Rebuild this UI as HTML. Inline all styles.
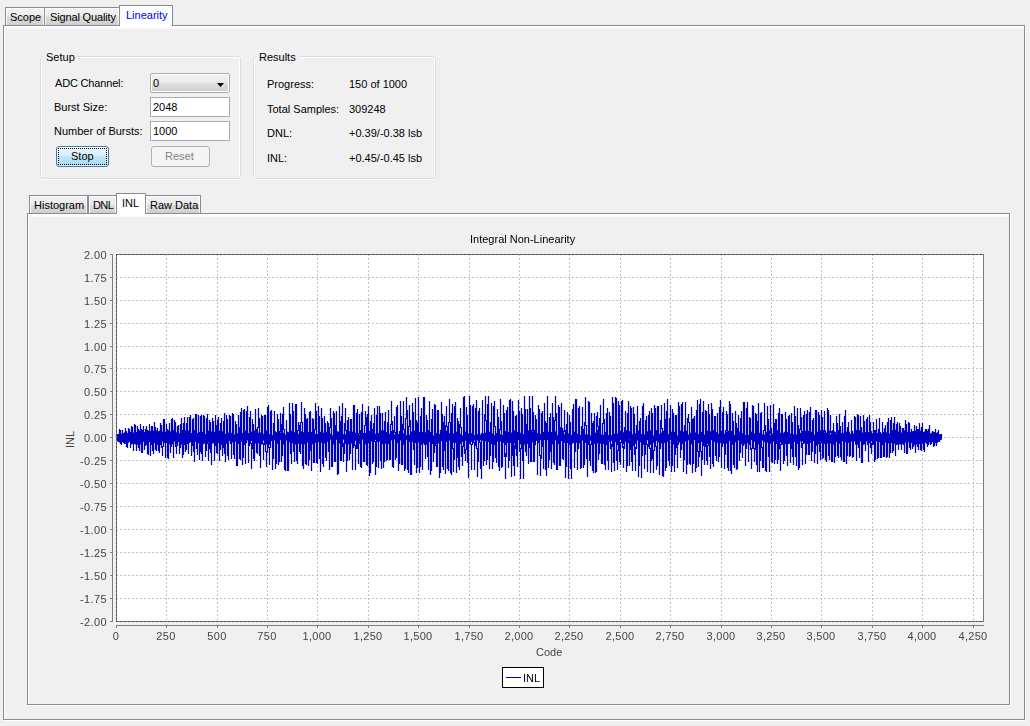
<!DOCTYPE html>
<html><head><meta charset="utf-8"><style>
html,body{margin:0;padding:0;}
body{width:1030px;height:726px;background:#f0f0f0;position:relative;overflow:hidden;font-family:"Liberation Sans", sans-serif;}
.t{position:absolute;white-space:nowrap;line-height:13px;}
.g{will-change:transform;}
.b{position:absolute;}
</style></head><body>
<div class="b" style="left:3px;top:25px;width:1022px;height:695px;box-sizing:border-box;border:1px solid #898c95;"></div><div class="b" style="left:4px;top:26px;width:1020px;height:693px;box-sizing:border-box;border:1px solid #fff;border-right:0;border-bottom:0;"></div><div class="b" style="left:4px;top:27px;width:1019px;height:2px;background:linear-gradient(#fff,#f6f6f6);"></div><div class="b" style="left:1025px;top:25px;width:1px;height:696px;background:#fff;"></div><div class="b" style="left:3px;top:720px;width:1023px;height:1px;background:#fff;"></div><div class="b" style="left:5px;top:7px;width:40px;height:18px;box-sizing:border-box;border:1px solid #898c95;border-bottom:0;background:linear-gradient(#f2f2f2 0%,#ebebeb 50%,#dddddd 50%,#cfcfcf 100%);"></div><div class="b" style="left:6px;top:8px;width:38px;height:17px;box-sizing:border-box;border:1px solid rgba(255,255,255,.8);border-bottom:0;"></div><div class="t" style="left:10px;top:11px;font-size:11px;color:#000;">Scope</div><div class="b" style="left:44px;top:7px;width:76px;height:18px;box-sizing:border-box;border:1px solid #898c95;border-bottom:0;background:linear-gradient(#f2f2f2 0%,#ebebeb 50%,#dddddd 50%,#cfcfcf 100%);"></div><div class="b" style="left:45px;top:8px;width:74px;height:17px;box-sizing:border-box;border:1px solid rgba(255,255,255,.8);border-bottom:0;"></div><div class="t" style="left:50px;top:11px;font-size:11px;color:#000;letter-spacing:-0.15px;">Signal Quality</div><div class="b" style="left:119px;top:5px;width:54px;height:21px;box-sizing:border-box;border:1px solid #898c95;border-bottom:0;background:#fff;"></div><div class="b" style="left:120px;top:26px;width:52px;height:1px;background:#fff;"></div><div class="t" style="left:126px;top:9px;font-size:11px;color:#0000f0;">Linearity</div><div class="b" style="left:42px;top:56px;width:197px;height:1px;background:#d5dfe5;"></div><div class="b" style="left:42px;top:178px;width:197px;height:1px;background:#d5dfe5;"></div><div class="b" style="left:40px;top:58px;width:1px;height:119px;background:#d5dfe5;"></div><div class="b" style="left:240px;top:58px;width:1px;height:119px;background:#d5dfe5;"></div><div class="b" style="left:41px;top:57px;width:1px;height:1px;background:#d5dfe5;"></div><div class="b" style="left:239px;top:57px;width:1px;height:1px;background:#d5dfe5;"></div><div class="b" style="left:41px;top:177px;width:1px;height:1px;background:#d5dfe5;"></div><div class="b" style="left:239px;top:177px;width:1px;height:1px;background:#d5dfe5;"></div><div class="b" style="left:42px;top:57px;width:197px;height:1px;background:#fff;"></div><div class="b" style="left:41px;top:58px;width:1px;height:119px;background:#fff;"></div><div class="b" style="left:239px;top:58px;width:1px;height:119px;background:#fff;"></div><div class="b" style="left:42px;top:179px;width:197px;height:1px;background:#fff;"></div><div class="b" style="left:44px;top:55px;width:33px;height:4px;background:#f0f0f0;"></div><div class="t" style="left:46px;top:51px;font-size:11px;color:#000;">Setup</div><div class="b" style="left:255px;top:56px;width:179px;height:1px;background:#d5dfe5;"></div><div class="b" style="left:255px;top:178px;width:179px;height:1px;background:#d5dfe5;"></div><div class="b" style="left:253px;top:58px;width:1px;height:119px;background:#d5dfe5;"></div><div class="b" style="left:435px;top:58px;width:1px;height:119px;background:#d5dfe5;"></div><div class="b" style="left:254px;top:57px;width:1px;height:1px;background:#d5dfe5;"></div><div class="b" style="left:434px;top:57px;width:1px;height:1px;background:#d5dfe5;"></div><div class="b" style="left:254px;top:177px;width:1px;height:1px;background:#d5dfe5;"></div><div class="b" style="left:434px;top:177px;width:1px;height:1px;background:#d5dfe5;"></div><div class="b" style="left:255px;top:57px;width:179px;height:1px;background:#fff;"></div><div class="b" style="left:254px;top:58px;width:1px;height:119px;background:#fff;"></div><div class="b" style="left:434px;top:58px;width:1px;height:119px;background:#fff;"></div><div class="b" style="left:255px;top:179px;width:179px;height:1px;background:#fff;"></div><div class="b" style="left:257px;top:55px;width:42px;height:4px;background:#f0f0f0;"></div><div class="t" style="left:259px;top:51px;font-size:11px;color:#000;">Results</div><div class="t" style="left:55px;top:77px;font-size:11px;color:#000;letter-spacing:-0.17px;">ADC Channel:</div><div class="t" style="left:54px;top:101px;font-size:11px;color:#000;">Burst Size:</div><div class="t" style="left:54px;top:125px;font-size:11px;color:#000;">Number of Bursts:</div><div class="b" style="left:150px;top:73px;width:80px;height:20px;box-sizing:border-box;border:1px solid #acacac;border-radius:2px;background:linear-gradient(#f2f2f2 0%,#ebebeb 45%,#dddddd 55%,#cfcfcf 100%);box-shadow:inset 0 0 0 1px #fff;"></div><div class="t" style="left:153px;top:77px;font-size:11px;color:#000;">0</div><svg class="b" style="left:217px;top:83px" width="8" height="5"><path d="M0,0H7L3.5,4Z" fill="#000"/></svg><div class="b" style="left:150px;top:97px;width:80px;height:20px;box-sizing:border-box;border:1px solid #abadb3;background:#fff;border-top-color:#abadb3;"></div><div class="t" style="left:153px;top:101px;font-size:11px;color:#000;">2048</div><div class="b" style="left:150px;top:121px;width:80px;height:20px;box-sizing:border-box;border:1px solid #abadb3;background:#fff;"></div><div class="t" style="left:153px;top:125px;font-size:11px;color:#000;">1000</div><div class="b" style="left:56px;top:146px;width:53px;height:21px;box-sizing:border-box;border:1px solid #3c7fb1;border-radius:3px;background:linear-gradient(#eaf6fd 0%,#d9f0fc 45%,#bee6fd 50%,#a7d9f5 100%);box-shadow:inset 0 0 0 1px rgba(255,255,255,.6);"></div><div class="b" style="left:58px;top:148px;width:49px;height:17px;box-sizing:border-box;border:1px dotted #000;"></div><div class="t" style="left:71px;top:150px;font-size:11px;color:#000;">Stop</div><div class="b" style="left:151px;top:146px;width:59px;height:21px;box-sizing:border-box;border:1px solid #adb2b5;border-radius:3px;background:#f4f4f4;"></div><div class="t" style="left:165px;top:150px;font-size:11px;color:#838383;">Reset</div><div class="t" style="left:267px;top:78px;font-size:11px;color:#000;">Progress:</div><div class="t" style="left:349px;top:78px;font-size:11px;color:#000;">150 of 1000</div><div class="t" style="left:267px;top:103px;font-size:11px;color:#000;">Total Samples:</div><div class="t" style="left:349px;top:103px;font-size:11px;color:#000;">309248</div><div class="t" style="left:267px;top:127px;font-size:11px;color:#000;">DNL:</div><div class="t" style="left:349px;top:127px;font-size:11px;color:#000;">+0.39/-0.38 lsb</div><div class="t" style="left:267px;top:152px;font-size:11px;color:#000;">INL:</div><div class="t" style="left:349px;top:152px;font-size:11px;color:#000;">+0.45/-0.45 lsb</div><div class="b" style="left:27px;top:213px;width:983px;height:492px;box-sizing:border-box;border:1px solid #898c95;"></div><div class="b" style="left:28px;top:214px;width:981px;height:490px;box-sizing:border-box;border:1px solid #fff;border-right:0;border-bottom:0;"></div><div class="b" style="left:28px;top:215px;width:980px;height:2px;background:linear-gradient(#fff,#f6f6f6);"></div><div class="b" style="left:1010px;top:213px;width:1px;height:493px;background:#fff;"></div><div class="b" style="left:27px;top:705px;width:984px;height:1px;background:#fff;"></div><div class="b" style="left:29px;top:195px;width:59px;height:18px;box-sizing:border-box;border:1px solid #898c95;border-bottom:0;background:linear-gradient(#f2f2f2 0%,#ebebeb 50%,#dddddd 50%,#cfcfcf 100%);"></div><div class="b" style="left:30px;top:196px;width:57px;height:17px;box-sizing:border-box;border:1px solid rgba(255,255,255,.8);border-bottom:0;"></div><div class="t" style="left:34px;top:199px;font-size:11px;color:#000;">Histogram</div><div class="b" style="left:88px;top:195px;width:29px;height:18px;box-sizing:border-box;border:1px solid #898c95;border-bottom:0;background:linear-gradient(#f2f2f2 0%,#ebebeb 50%,#dddddd 50%,#cfcfcf 100%);"></div><div class="b" style="left:89px;top:196px;width:27px;height:17px;box-sizing:border-box;border:1px solid rgba(255,255,255,.8);border-bottom:0;"></div><div class="t" style="left:93px;top:199px;font-size:11px;color:#000;letter-spacing:-0.6px;">DNL</div><div class="b" style="left:145px;top:195px;width:56px;height:18px;box-sizing:border-box;border:1px solid #898c95;border-bottom:0;background:linear-gradient(#f2f2f2 0%,#ebebeb 50%,#dddddd 50%,#cfcfcf 100%);"></div><div class="b" style="left:146px;top:196px;width:54px;height:17px;box-sizing:border-box;border:1px solid rgba(255,255,255,.8);border-bottom:0;"></div><div class="t" style="left:150px;top:199px;font-size:11px;color:#000;">Raw Data</div><div class="b" style="left:116px;top:193px;width:30px;height:21px;box-sizing:border-box;border:1px solid #898c95;border-bottom:0;background:#fff;"></div><div class="b" style="left:117px;top:214px;width:28px;height:1px;background:#fff;"></div><div class="t" style="left:122px;top:197px;font-size:11px;color:#000;">INL</div><svg class="b" style="left:0;top:0" width="1030" height="726"><rect x="116" y="254" width="867" height="367" fill="#fff"/><path d="M116.5 254V621M166.5 254V621M217.5 254V621M267.5 254V621M317.5 254V621M368.5 254V621M418.5 254V621M469.5 254V621M519.5 254V621M569.5 254V621M620.5 254V621M670.5 254V621M721.5 254V621M771.5 254V621M821.5 254V621M872.5 254V621M922.5 254V621M973.5 254V621M116 254.5H983M116 277.5H983M116 300.5H983M116 323.5H983M116 346.5H983M116 368.5H983M116 391.5H983M116 414.5H983M116 437.5H983M116 460.5H983M116 483.5H983M116 506.5H983M116 529.5H983M116 552.5H983M116 575.5H983M116 598.5H983M116 621.5H983" stroke="#c0c0c0" stroke-width="1" stroke-dasharray="2,2" fill="none"/><path d="M116.5 434V438M117.5 434V441M118.5 439V442M119.5 429V440M120.5 430V444M121.5 437V445M122.5 430V438M123.5 435V443M124.5 439V444M125.5 428V440M126.5 434V447M127.5 436V448M128.5 428V437M129.5 429V441M130.5 440V448M131.5 426V441M132.5 427V444M133.5 439V451M134.5 424V440M135.5 425V443M136.5 442V451M137.5 426V444M138.5 429V448M139.5 437V451M140.5 424V438M141.5 429V453M142.5 430V453M143.5 426V435M144.5 434V450M145.5 429V446M146.5 426V436M147.5 435V454M148.5 432V455M149.5 424V435M150.5 434V456M151.5 426V445M152.5 426V451M153.5 433V454M154.5 422V434M155.5 427V450M156.5 434V451M157.5 428V435M158.5 433V451M159.5 437V453M160.5 423V438M161.5 425V448M162.5 446V456M163.5 419V447M164.5 419V443M165.5 442V458M166.5 424V443M167.5 429V458M168.5 436V459M169.5 423V437M170.5 435V453M171.5 419V447M172.5 418V442M173.5 436V458M174.5 420V437M175.5 422V447M176.5 445V454M177.5 426V446M178.5 425V440M179.5 439V454M180.5 424V448M181.5 418V431M182.5 430V458M183.5 423V455M184.5 417V433M185.5 432V452M186.5 423V450M187.5 417V444M188.5 442V454M189.5 417V443M190.5 415V434M191.5 433V456M192.5 419V446M193.5 418V452M194.5 440V462M195.5 414V441M196.5 414V449M197.5 433V455M198.5 415V434M199.5 432V460M200.5 416V452M201.5 415V454M202.5 440V461M203.5 415V441M204.5 416V440M205.5 439V457M206.5 418V451M207.5 414V444M208.5 443V461M209.5 420V449M210.5 422V453M211.5 439V465M212.5 418V440M213.5 421V441M214.5 438V461M215.5 415V446M216.5 425V453M217.5 420V454M218.5 417V438M219.5 437V461M220.5 423V450M221.5 418V445M222.5 444V456M223.5 421V448M224.5 413V454M225.5 438V462M226.5 415V439M227.5 419V456M228.5 435V460M229.5 415V436M230.5 416V444M231.5 441V459M232.5 413V442M233.5 414V455M234.5 440V459M235.5 421V441M236.5 424V466M237.5 434V466M238.5 415V435M239.5 427V459M240.5 412V460M241.5 408V440M242.5 439V465M243.5 410V458M244.5 409V445M245.5 442V464M246.5 411V443M247.5 406V434M248.5 433V463M249.5 417V446M250.5 411V444M251.5 443V469M252.5 419V449M253.5 424V459M254.5 434V461M255.5 409V435M256.5 429V453M257.5 427V454M258.5 408V428M259.5 418V456M260.5 436V468M261.5 415V439M262.5 416V444M263.5 443V460M264.5 415V445M265.5 415V452M266.5 451V467M267.5 407V453M268.5 405V448M269.5 447V465M270.5 411V448M271.5 410V437M272.5 436V470M273.5 423V459M274.5 411V438M275.5 437V469M276.5 438V464M277.5 414V439M278.5 419V465M279.5 431V462M280.5 413V432M281.5 424V462M282.5 414V456M283.5 407V430M284.5 429V470M285.5 436V471M286.5 420V440M287.5 439V471M288.5 436V471M289.5 403V437M290.5 414V454M291.5 439V464M292.5 403V440M293.5 411V452M294.5 439V462M295.5 404V440M296.5 404V461M297.5 430V464M298.5 422V431M299.5 425V452M300.5 422V454M301.5 402V423M302.5 422V466M303.5 439V469M304.5 408V440M305.5 414V464M306.5 419V465M307.5 418V439M308.5 438V466M309.5 412V460M310.5 411V451M311.5 441V471M312.5 418V442M313.5 419V463M314.5 429V463M315.5 403V430M316.5 411V463M317.5 434V464M318.5 406V435M319.5 416V459M320.5 441V472M321.5 408V442M322.5 418V464M323.5 441V467M324.5 416V442M325.5 423V458M326.5 434V461M327.5 421V435M328.5 423V452M329.5 427V470M330.5 408V428M331.5 418V467M332.5 437V467M333.5 411V438M334.5 413V462M335.5 425V462M336.5 411V437M337.5 436V475M338.5 433V474M339.5 406V434M340.5 421V461M341.5 416V461M342.5 403V447M343.5 443V462M344.5 423V454M345.5 408V431M346.5 430V472M347.5 420V461M348.5 417V437M349.5 436V460M350.5 419V454M351.5 419V441M352.5 440V470M353.5 405V448M354.5 405V446M355.5 445V470M356.5 413V449M357.5 409V449M358.5 433V464M359.5 414V434M360.5 433V467M361.5 412V468M362.5 404V434M363.5 433V462M364.5 425V462M365.5 411V426M366.5 417V465M367.5 414V466M368.5 406V437M369.5 436V476M370.5 421V473M371.5 415V433M372.5 429V464M373.5 423V462M374.5 408V442M375.5 441V475M376.5 415V467M377.5 406V434M378.5 433V468M379.5 406V441M380.5 413V461M381.5 436V469M382.5 413V438M383.5 433V468M384.5 421V462M385.5 412V440M386.5 439V461M387.5 422V460M388.5 410V437M389.5 436V460M390.5 424V460M391.5 401V425M392.5 421V467M393.5 430V468M394.5 416V433M395.5 432V460M396.5 407V458M397.5 405V435M398.5 434V471M399.5 431V464M400.5 401V432M401.5 416V465M402.5 424V465M403.5 401V430M404.5 429V471M405.5 418V469M406.5 397V419M407.5 410V470M408.5 426V473M409.5 405V427M410.5 420V475M411.5 433V475M412.5 403V434M413.5 412V450M414.5 440V465M415.5 398V441M416.5 420V473M417.5 422V468M418.5 397V433M419.5 432V473M420.5 416V467M421.5 408V439M422.5 438V470M423.5 397V443M424.5 397V445M425.5 437V459M426.5 415V438M427.5 420V457M428.5 430V470M429.5 401V433M430.5 432V475M431.5 419V471M432.5 409V444M433.5 443V462M434.5 404V453M435.5 405V446M436.5 445V467M437.5 410V467M438.5 410V435M439.5 434V478M440.5 430V473M441.5 402V432M442.5 414V467M443.5 422V470M444.5 416V451M445.5 425V474M446.5 406V427M447.5 426V469M448.5 422V471M449.5 399V423M450.5 422V473M451.5 413V475M452.5 404V449M453.5 448V472M454.5 406V460M455.5 402V443M456.5 442V473M457.5 418V458M458.5 421V467M459.5 424V470M460.5 408V428M461.5 427V457M462.5 446V466M463.5 397V447M464.5 396V454M465.5 449V461M466.5 407V450M467.5 415V463M468.5 437V478M469.5 396V438M470.5 405V445M471.5 444V470M472.5 406V445M473.5 404V443M474.5 442V470M475.5 408V446M476.5 400V449M477.5 448V477M478.5 411V462M479.5 408V443M480.5 442V469M481.5 433V479M482.5 400V438M483.5 437V466M484.5 414V461M485.5 396V421M486.5 420V465M487.5 404V460M488.5 396V442M489.5 440V469M490.5 422V456M491.5 403V436M492.5 435V469M493.5 406V462M494.5 401V427M495.5 426V458M496.5 433V463M497.5 409V434M498.5 417V467M499.5 429V471M500.5 399V430M501.5 421V468M502.5 437V467M503.5 405V443M504.5 413V457M505.5 453V479M506.5 410V457M507.5 407V433M508.5 432V468M509.5 400V461M510.5 399V443M511.5 442V477M512.5 401V456M513.5 411V466M514.5 445V476M515.5 416V449M516.5 415V456M517.5 439V467M518.5 400V440M519.5 411V452M520.5 448V479M521.5 408V449M522.5 414V461M523.5 441V479M524.5 396V442M525.5 409V452M526.5 424V456M527.5 409V439M528.5 438V464M529.5 396V448M530.5 408V462M531.5 430V462M532.5 396V431M533.5 412V462M534.5 437V462M535.5 415V439M536.5 419V440M537.5 439V475M538.5 405V441M539.5 409V456M540.5 455V476M541.5 413V459M542.5 411V447M543.5 436V469M544.5 403V437M545.5 421V470M546.5 423V476M547.5 396V435M548.5 434V468M549.5 417V460M550.5 413V452M551.5 433V469M552.5 403V434M553.5 417V463M554.5 420V465M555.5 396V421M556.5 413V470M557.5 440V470M558.5 405V441M559.5 407V466M560.5 427V466M561.5 403V432M562.5 428V459M563.5 431V460M564.5 410V432M565.5 430V478M566.5 424V467M567.5 412V440M568.5 439V479M569.5 415V445M570.5 422V469M571.5 435V479M572.5 409V441M573.5 404V439M574.5 438V468M575.5 399V452M576.5 399V442M577.5 440V470M578.5 408V449M579.5 406V436M580.5 435V469M581.5 426V468M582.5 407V430M583.5 429V468M584.5 422V465M585.5 397V426M586.5 425V459M587.5 438V477M588.5 401V439M589.5 402V461M590.5 444V466M591.5 413V445M592.5 423V471M593.5 421V473M594.5 413V434M595.5 433V473M596.5 416V472M597.5 412V427M598.5 426V460M599.5 418V454M600.5 405V437M601.5 436V464M602.5 423V464M603.5 399V424M604.5 419V465M605.5 432V470M606.5 413V435M607.5 408V461M608.5 441V470M609.5 412V442M610.5 416V449M611.5 444V472M612.5 397V447M613.5 403V463M614.5 441V471M615.5 397V442M616.5 398V461M617.5 450V470M618.5 401V451M619.5 405V462M620.5 442V465M621.5 401V443M622.5 400V448M623.5 446V468M624.5 427V449M625.5 411V435M626.5 434V472M627.5 413V466M628.5 401V441M629.5 440V466M630.5 406V450M631.5 408V462M632.5 435V471M633.5 407V446M634.5 414V455M635.5 447V471M636.5 425V449M637.5 406V438M638.5 437V477M639.5 421V466M640.5 418V435M641.5 434V478M642.5 406V456M643.5 403V436M644.5 435V469M645.5 420V455M646.5 416V445M647.5 444V472M648.5 415V447M649.5 411V449M650.5 448V473M651.5 408V461M652.5 413V459M653.5 450V473M654.5 405V451M655.5 408V447M656.5 446V470M657.5 406V466M658.5 406V437M659.5 436V475M660.5 420V449M661.5 405V429M662.5 428V476M663.5 433V477M664.5 403V434M665.5 419V471M666.5 411V468M667.5 399V435M668.5 434V461M669.5 418V466M670.5 405V438M671.5 437V472M672.5 409V466M673.5 413V443M674.5 442V472M675.5 415V455M676.5 415V448M677.5 442V468M678.5 402V443M679.5 406V440M680.5 439V458M681.5 404V450M682.5 402V444M683.5 443V472M684.5 425V460M685.5 402V435M686.5 434V474M687.5 418V465M688.5 414V423M689.5 422V464M690.5 442V465M691.5 407V443M692.5 419V473M693.5 418V464M694.5 416V435M695.5 434V472M696.5 410V468M697.5 400V452M698.5 451V467M699.5 404V457M700.5 399V452M701.5 451V476M702.5 412V460M703.5 401V446M704.5 442V465M705.5 410V447M706.5 411V461M707.5 445V465M708.5 404V446M709.5 414V457M710.5 439V469M711.5 403V440M712.5 409V464M713.5 441V467M714.5 416V442M715.5 416V456M716.5 432V461M717.5 413V435M718.5 434V462M719.5 407V457M720.5 400V443M721.5 442V468M722.5 412V447M723.5 407V442M724.5 441V469M725.5 430V455M726.5 411V431M727.5 414V468M728.5 437V471M729.5 401V438M730.5 404V471M731.5 438V474M732.5 413V439M733.5 421V465M734.5 438V468M735.5 411V439M736.5 423V470M737.5 428V469M738.5 415V437M739.5 435V461M740.5 418V453M741.5 411V434M742.5 433V458M743.5 402V446M744.5 402V441M745.5 440V466M746.5 408V449M747.5 402V440M748.5 439V462M749.5 417V445M750.5 418V450M751.5 448V469M752.5 405V449M753.5 406V449M754.5 448V462M755.5 413V450M756.5 414V465M757.5 421V472M758.5 403V438M759.5 437V472M760.5 413V461M761.5 412V448M762.5 447V468M763.5 430V468M764.5 403V431M765.5 425V471M766.5 434V472M767.5 406V435M768.5 419V457M769.5 433V472M770.5 405V434M771.5 428V462M772.5 436V463M773.5 404V437M774.5 423V464M775.5 419V460M776.5 419V444M777.5 441V464M778.5 413V460M779.5 408V449M780.5 444V471M781.5 414V445M782.5 414V438M783.5 437V464M784.5 437V461M785.5 412V438M786.5 419V456M787.5 438V466M788.5 416V439M789.5 415V442M790.5 441V463M791.5 413V449M792.5 422V457M793.5 435V465M794.5 406V436M795.5 416V457M796.5 437V466M797.5 408V444M798.5 425V470M799.5 429V468M800.5 408V430M801.5 417V448M802.5 443V465M803.5 415V444M804.5 411V440M805.5 439V464M806.5 414V455M807.5 410V436M808.5 435V455M809.5 412V455M810.5 407V438M811.5 437V461M812.5 420V452M813.5 418V441M814.5 440V463M815.5 410V454M816.5 410V446M817.5 443V464M818.5 412V444M819.5 415V452M820.5 442V460M821.5 410V443M822.5 417V459M823.5 430V458M824.5 411V432M825.5 431V460M826.5 441V462M827.5 408V442M828.5 410V456M829.5 432V460M830.5 415V433M831.5 431V462M832.5 431V462M833.5 423V435M834.5 434V463M835.5 432V457M836.5 416V433M837.5 423V456M838.5 430V458M839.5 414V431M840.5 426V457M841.5 433V460M842.5 422V437M843.5 434V462M844.5 416V462M845.5 410V440M846.5 439V464M847.5 427V456M848.5 422V437M849.5 436V457M850.5 435V456M851.5 420V436M852.5 431V458M853.5 436V457M854.5 416V437M855.5 417V443M856.5 442V461M857.5 414V444M858.5 415V448M859.5 435V458M860.5 416V436M861.5 427V463M862.5 436V463M863.5 415V437M864.5 421V444M865.5 434V451M866.5 419V437M867.5 417V445M868.5 437V462M869.5 415V438M870.5 422V448M871.5 443V454M872.5 435V445M873.5 422V436M874.5 430V462M875.5 430V460M876.5 419V435M877.5 434V459M878.5 429V458M879.5 418V437M880.5 436V458M881.5 435V458M882.5 422V436M883.5 435V457M884.5 428V457M885.5 425V436M886.5 435V458M887.5 422V457M888.5 418V438M889.5 437V458M890.5 420V453M891.5 417V438M892.5 437V453M893.5 423V451M894.5 417V438M895.5 437V456M896.5 424V445M897.5 422V440M898.5 436V450M899.5 423V437M900.5 426V444M901.5 443V450M902.5 428V444M903.5 428V445M904.5 436V453M905.5 420V437M906.5 424V454M907.5 433V454M908.5 422V434M909.5 423V448M910.5 437V450M911.5 429V438M912.5 433V449M913.5 431V447M914.5 425V445M915.5 439V453M916.5 426V440M917.5 429V447M918.5 429V450M919.5 423V433M920.5 432V450M921.5 427V451M922.5 423V433M923.5 432V450M924.5 436V452M925.5 429V439M926.5 429V440M927.5 439V447M928.5 429V445M929.5 425V437M930.5 435V445M931.5 434V444M932.5 431V437M933.5 436V447M934.5 432V446M935.5 429V440M936.5 439V446M937.5 432V440M938.5 430V439M939.5 438V442M940.5 434V440M941.5 434V438" stroke="#0000c0" stroke-width="1.25" fill="none"/><path d="M116.5 434.9V439.9M117.5 434.7V441.4M118.5 433.8V441.1M119.5 433.4V442.5M120.5 433.8V441.6M121.5 433.7V442.5M122.5 433.2V442.1M123.5 433.2V441.7M124.5 432.4V441.8M125.5 432.0V443.6M126.5 431.1V444.0M127.5 432.9V442.0M128.5 431.4V442.9M129.5 432.3V441.9M130.5 431.9V443.0M131.5 430.4V444.5M132.5 432.4V443.7M133.5 432.6V442.6M134.5 431.8V443.9M135.5 432.2V444.6M136.5 432.0V443.7M137.5 432.3V444.7M138.5 432.0V444.0M139.5 430.5V442.9M140.5 431.4V444.4M141.5 431.4V444.3M142.5 431.4V444.7M143.5 433.1V441.9M144.5 432.0V444.4M145.5 433.1V442.3M146.5 432.9V444.9M147.5 429.9V442.1M148.5 430.7V442.6M149.5 432.7V442.1M150.5 430.9V443.6M151.5 429.9V444.4M152.5 432.1V442.2M153.5 430.7V442.6M154.5 433.2V443.2M155.5 431.1V443.3M156.5 430.4V444.1M157.5 429.8V444.8M158.5 431.4V444.0M159.5 430.5V444.4M160.5 432.4V445.0M161.5 429.9V443.6M162.5 431.6V441.7M163.5 429.7V443.5M164.5 432.0V442.2M165.5 431.8V444.7M166.5 431.3V442.3M167.5 430.2V442.4M168.5 430.3V443.6M169.5 431.7V444.3M170.5 431.4V443.2M171.5 432.1V444.0M172.5 431.7V444.2M173.5 429.8V441.4M174.5 432.9V441.5M175.5 429.8V442.3M176.5 432.3V444.6M177.5 432.7V441.5M178.5 431.7V442.1M179.5 433.2V441.5M180.5 431.7V445.1M181.5 430.7V444.6M182.5 432.9V442.7M183.5 430.6V442.8M184.5 430.8V445.0M185.5 430.1V442.7M186.5 430.0V444.5M187.5 431.0V443.9M188.5 430.5V443.0M189.5 432.5V442.2M190.5 432.4V442.2M191.5 433.5V444.8M192.5 431.0V444.1M193.5 433.8V445.0M194.5 430.1V441.1M195.5 431.1V441.7M196.5 432.3V443.0M197.5 433.8V443.7M198.5 430.2V443.2M199.5 433.3V442.6M200.5 432.6V442.2M201.5 433.3V441.4M202.5 431.8V444.7M203.5 434.0V444.3M204.5 432.8V443.5M205.5 434.1V440.9M206.5 430.7V441.6M207.5 432.7V442.6M208.5 430.7V442.6M209.5 430.9V442.2M210.5 432.5V441.5M211.5 431.4V444.3M212.5 433.7V443.7M213.5 432.8V443.3M214.5 431.9V444.8M215.5 434.1V442.7M216.5 433.7V441.0M217.5 431.4V443.5M218.5 433.8V443.2M219.5 430.6V444.1M220.5 433.3V442.0M221.5 430.8V443.3M222.5 431.2V444.5M223.5 434.3V442.2M224.5 434.1V443.0M225.5 433.9V443.1M226.5 433.2V443.8M227.5 432.7V443.2M228.5 432.5V441.6M229.5 430.2V440.9M230.5 431.6V442.1M231.5 432.9V442.6M232.5 432.0V442.5M233.5 431.5V444.5M234.5 434.4V442.1M235.5 434.1V441.6M236.5 434.0V441.3M237.5 433.3V440.3M238.5 433.3V443.9M239.5 430.4V440.6M240.5 434.1V441.3M241.5 433.1V441.8M242.5 432.9V443.9M243.5 434.1V441.3M244.5 432.9V442.6M245.5 430.8V443.0M246.5 433.9V443.1M247.5 431.9V440.4M248.5 434.5V441.7M249.5 433.1V444.0M250.5 434.4V444.0M251.5 431.7V440.9M252.5 430.5V443.5M253.5 430.7V444.2M254.5 430.8V443.9M255.5 431.6V443.7M256.5 434.6V444.8M257.5 431.3V443.8M258.5 432.6V443.3M259.5 432.1V441.8M260.5 432.5V440.7M261.5 431.8V444.5M262.5 433.9V444.4M263.5 433.7V440.6M264.5 432.0V444.2M265.5 433.9V443.3M266.5 430.6V444.3M267.5 433.4V442.8M268.5 433.6V443.2M269.5 434.2V444.7M270.5 432.4V440.0M271.5 433.3V441.1M272.5 434.9V441.6M273.5 430.9V443.2M274.5 431.4V440.3M275.5 431.3V442.5M276.5 432.3V440.6M277.5 430.3V443.8M278.5 431.2V444.6M279.5 433.5V441.8M280.5 432.5V440.2M281.5 431.3V442.4M282.5 430.5V443.0M283.5 432.9V444.5M284.5 433.5V442.6M285.5 434.7V440.9M286.5 431.0V440.4M287.5 431.6V440.8M288.5 432.2V440.7M289.5 432.5V442.4M290.5 432.9V440.2M291.5 431.1V443.9M292.5 430.3V443.3M293.5 431.2V441.8M294.5 432.3V443.4M295.5 432.7V444.6M296.5 432.4V439.9M297.5 435.0V440.4M298.5 433.9V443.7M299.5 430.3V440.7M300.5 434.8V441.3M301.5 431.3V444.1M302.5 434.0V443.4M303.5 432.2V442.1M304.5 434.1V444.4M305.5 432.0V440.8M306.5 433.0V443.3M307.5 431.8V442.6M308.5 432.1V442.6M309.5 431.3V443.4M310.5 434.1V444.4M311.5 432.1V441.2M312.5 432.8V444.4M313.5 434.6V441.3M314.5 434.3V440.5M315.5 434.1V442.8M316.5 435.0V443.0M317.5 435.1V441.5M318.5 434.5V442.1M319.5 432.9V443.5M320.5 431.9V441.9M321.5 430.3V442.9M322.5 432.7V443.8M323.5 432.7V444.6M324.5 432.6V443.6M325.5 432.9V443.6M326.5 431.8V443.1M327.5 430.3V441.9M328.5 434.8V443.6M329.5 433.7V442.6M330.5 433.7V439.7M331.5 430.4V440.1M332.5 435.2V440.2M333.5 430.5V444.5M334.5 434.6V444.2M335.5 433.2V442.1M336.5 431.9V439.8M337.5 431.2V444.4M338.5 431.7V439.7M339.5 431.9V443.5M340.5 430.9V443.2M341.5 435.1V443.3M342.5 434.6V443.9M343.5 434.1V439.7M344.5 433.7V439.6M345.5 434.4V443.8M346.5 432.8V441.3M347.5 434.7V442.3M348.5 433.8V444.4M349.5 431.3V443.7M350.5 434.0V444.7M351.5 434.3V443.5M352.5 431.7V443.7M353.5 431.2V443.2M354.5 432.9V443.2M355.5 432.6V440.6M356.5 434.4V444.2M357.5 432.9V442.4M358.5 433.4V444.6M359.5 434.5V443.8M360.5 430.1V441.5M361.5 432.6V439.5M362.5 431.3V439.6M363.5 433.6V441.9M364.5 431.0V439.8M365.5 433.1V444.4M366.5 431.7V440.2M367.5 432.4V444.3M368.5 435.5V443.2M369.5 430.9V443.2M370.5 432.6V441.7M371.5 433.0V441.4M372.5 433.0V443.6M373.5 430.2V440.5M374.5 434.8V440.6M375.5 433.7V439.9M376.5 433.8V441.7M377.5 431.6V441.9M378.5 434.0V443.6M379.5 431.9V441.5M380.5 434.4V443.1M381.5 430.5V441.0M382.5 434.4V444.3M383.5 430.1V444.4M384.5 431.9V440.4M385.5 435.3V443.6M386.5 432.2V440.6M387.5 433.1V444.5M388.5 431.1V444.0M389.5 433.9V443.9M390.5 431.1V441.4M391.5 431.0V440.3M392.5 430.1V444.9M393.5 435.4V439.8M394.5 434.6V439.6M395.5 433.6V440.2M396.5 433.6V441.0M397.5 432.2V443.2M398.5 434.7V444.1M399.5 433.5V441.9M400.5 430.4V440.4M401.5 433.6V440.6M402.5 433.9V442.4M403.5 433.2V444.9M404.5 434.2V441.7M405.5 434.1V441.3M406.5 435.3V439.8M407.5 433.2V440.0M408.5 435.4V442.8M409.5 434.8V442.0M410.5 431.1V443.3M411.5 431.6V442.5M412.5 431.1V442.2M413.5 431.8V442.9M414.5 430.5V440.3M415.5 434.1V443.0M416.5 435.0V440.2M417.5 435.3V444.8M418.5 431.4V442.1M419.5 435.2V443.0M420.5 432.2V441.8M421.5 430.6V444.8M422.5 432.1V442.9M423.5 429.9V443.5M424.5 432.3V441.1M425.5 432.3V445.0M426.5 431.4V444.6M427.5 432.1V443.3M428.5 433.5V439.6M429.5 430.7V442.2M430.5 434.2V443.1M431.5 430.5V443.0M432.5 430.2V441.2M433.5 435.5V444.2M434.5 432.9V443.9M435.5 433.4V439.6M436.5 433.1V444.3M437.5 429.8V443.6M438.5 434.4V443.2M439.5 435.5V441.2M440.5 429.8V440.9M441.5 432.0V441.1M442.5 433.1V439.6M443.5 429.9V440.2M444.5 434.8V439.8M445.5 433.8V443.7M446.5 430.7V441.9M447.5 430.3V443.3M448.5 431.6V439.7M449.5 433.1V440.7M450.5 432.0V442.5M451.5 429.9V440.1M452.5 433.3V441.9M453.5 433.5V442.7M454.5 432.0V444.3M455.5 432.0V442.3M456.5 431.8V444.3M457.5 432.3V444.8M458.5 433.9V440.5M459.5 434.2V439.7M460.5 433.9V443.8M461.5 435.4V442.6M462.5 435.5V441.7M463.5 434.7V441.1M464.5 431.7V444.5M465.5 431.4V440.8M466.5 429.9V443.2M467.5 434.7V440.7M468.5 433.5V441.0M469.5 430.4V444.0M470.5 429.9V445.1M471.5 433.1V441.7M472.5 434.6V442.6M473.5 431.2V442.6M474.5 435.1V440.5M475.5 431.5V443.1M476.5 431.5V442.7M477.5 434.2V440.5M478.5 431.7V441.4M479.5 431.3V440.6M480.5 434.7V440.2M481.5 433.7V443.7M482.5 435.4V440.7M483.5 433.4V445.0M484.5 433.2V443.2M485.5 432.6V441.2M486.5 432.2V442.8M487.5 434.5V440.0M488.5 429.7V441.4M489.5 431.9V441.1M490.5 430.8V444.5M491.5 433.3V444.1M492.5 433.4V443.8M493.5 431.2V441.1M494.5 435.3V445.0M495.5 435.4V442.7M496.5 434.0V442.7M497.5 433.0V441.8M498.5 431.7V440.3M499.5 433.0V445.3M500.5 434.3V441.6M501.5 433.4V445.3M502.5 434.9V440.1M503.5 429.7V440.8M504.5 431.1V444.5M505.5 431.0V445.0M506.5 431.2V442.6M507.5 430.1V443.0M508.5 433.7V442.6M509.5 435.4V441.9M510.5 433.1V442.5M511.5 432.6V444.4M512.5 434.3V439.9M513.5 432.4V443.7M514.5 430.4V443.7M515.5 431.3V441.8M516.5 434.5V442.8M517.5 432.0V441.2M518.5 434.4V440.2M519.5 429.9V440.8M520.5 432.7V444.4M521.5 434.2V445.3M522.5 430.9V440.8M523.5 434.1V441.4M524.5 431.4V444.6M525.5 430.7V442.2M526.5 432.6V442.1M527.5 432.8V443.9M528.5 430.4V443.6M529.5 432.2V440.4M530.5 435.1V442.5M531.5 434.6V442.0M532.5 431.3V442.4M533.5 430.2V445.3M534.5 429.9V442.4M535.5 432.0V445.2M536.5 430.2V440.9M537.5 433.1V441.7M538.5 431.9V443.2M539.5 431.3V442.8M540.5 434.1V440.2M541.5 434.2V442.2M542.5 434.2V441.4M543.5 431.9V441.5M544.5 433.2V440.1M545.5 432.9V440.6M546.5 430.3V440.0M547.5 430.3V440.2M548.5 431.5V444.3M549.5 435.0V444.2M550.5 433.6V443.2M551.5 432.1V439.7M552.5 433.2V444.5M553.5 433.8V444.3M554.5 430.5V443.8M555.5 431.3V440.4M556.5 432.4V445.3M557.5 435.2V441.1M558.5 431.0V444.1M559.5 433.7V440.6M560.5 432.4V443.7M561.5 432.2V441.1M562.5 429.7V445.2M563.5 430.5V443.2M564.5 434.1V442.7M565.5 434.1V440.6M566.5 432.1V445.3M567.5 431.1V443.1M568.5 433.3V443.8M569.5 430.8V445.0M570.5 432.2V445.0M571.5 435.2V440.5M572.5 431.9V443.8M573.5 433.5V442.8M574.5 431.5V445.3M575.5 434.7V440.8M576.5 429.9V442.6M577.5 433.8V442.0M578.5 430.1V440.3M579.5 432.9V443.2M580.5 435.1V440.6M581.5 430.3V442.1M582.5 430.3V440.5M583.5 433.1V442.0M584.5 429.8V444.2M585.5 434.3V442.9M586.5 432.5V441.0M587.5 434.5V443.2M588.5 431.1V445.0M589.5 431.3V445.2M590.5 435.5V440.6M591.5 431.6V443.3M592.5 433.2V441.4M593.5 432.6V441.1M594.5 432.6V444.0M595.5 432.7V443.3M596.5 433.6V441.5M597.5 429.8V443.3M598.5 434.2V441.8M599.5 434.8V440.3M600.5 435.3V443.7M601.5 434.4V441.1M602.5 435.0V441.1M603.5 434.9V444.2M604.5 433.4V440.6M605.5 432.4V443.7M606.5 433.8V445.0M607.5 431.5V442.1M608.5 435.0V440.8M609.5 434.9V441.5M610.5 430.4V443.6M611.5 435.1V440.9M612.5 433.1V443.8M613.5 431.4V442.8M614.5 433.7V444.3M615.5 434.7V442.2M616.5 434.7V440.6M617.5 433.6V445.1M618.5 430.5V440.1M619.5 429.9V440.9M620.5 431.0V439.9M621.5 430.1V440.0M622.5 431.5V443.5M623.5 432.3V444.4M624.5 431.7V444.5M625.5 434.2V441.8M626.5 430.3V442.4M627.5 430.2V444.2M628.5 434.8V443.2M629.5 431.2V439.7M630.5 431.0V444.4M631.5 432.2V443.5M632.5 434.3V441.3M633.5 431.6V444.8M634.5 431.2V442.9M635.5 433.3V443.8M636.5 432.0V440.2M637.5 430.5V440.5M638.5 430.5V444.7M639.5 433.8V443.6M640.5 434.4V442.4M641.5 434.7V440.5M642.5 430.0V439.8M643.5 434.6V445.0M644.5 434.4V444.8M645.5 434.9V442.6M646.5 430.2V439.5M647.5 431.3V440.1M648.5 431.8V441.5M649.5 431.8V441.9M650.5 430.3V444.7M651.5 435.2V439.9M652.5 434.4V441.7M653.5 435.5V442.8M654.5 433.9V440.5M655.5 432.4V440.9M656.5 430.2V440.9M657.5 434.9V441.9M658.5 432.8V442.4M659.5 434.1V441.2M660.5 430.5V440.2M661.5 432.6V443.4M662.5 434.9V444.2M663.5 430.9V441.4M664.5 431.8V443.0M665.5 433.3V443.9M666.5 430.7V440.8M667.5 433.1V441.9M668.5 435.1V441.3M669.5 433.3V444.9M670.5 434.7V439.8M671.5 431.7V440.2M672.5 431.3V441.2M673.5 431.3V444.6M674.5 431.8V443.2M675.5 430.2V440.8M676.5 431.8V443.0M677.5 435.4V441.6M678.5 431.8V445.0M679.5 433.0V442.5M680.5 430.7V439.8M681.5 435.1V441.5M682.5 435.3V439.7M683.5 431.5V443.2M684.5 433.6V443.8M685.5 430.2V441.5M686.5 430.7V441.7M687.5 434.2V440.6M688.5 434.6V440.3M689.5 430.9V443.8M690.5 432.7V443.0M691.5 433.4V444.5M692.5 434.9V439.7M693.5 433.3V441.0M694.5 432.1V439.9M695.5 432.4V443.7M696.5 432.5V442.7M697.5 432.8V439.9M698.5 434.1V443.2M699.5 430.2V444.1M700.5 433.1V444.6M701.5 431.9V441.9M702.5 430.2V441.7M703.5 432.6V441.9M704.5 434.5V442.9M705.5 433.0V441.3M706.5 433.1V444.1M707.5 430.8V443.9M708.5 433.6V443.2M709.5 430.9V440.7M710.5 431.5V444.7M711.5 434.8V440.1M712.5 435.4V444.7M713.5 430.2V443.5M714.5 434.0V439.7M715.5 434.7V442.7M716.5 434.9V441.9M717.5 431.8V442.9M718.5 433.7V442.1M719.5 430.7V441.7M720.5 435.3V439.6M721.5 430.9V443.2M722.5 434.4V444.0M723.5 430.2V443.7M724.5 433.9V442.3M725.5 432.2V440.3M726.5 431.6V443.6M727.5 433.1V443.5M728.5 430.8V443.1M729.5 431.3V441.1M730.5 433.7V439.8M731.5 431.1V440.3M732.5 431.9V444.8M733.5 432.3V442.4M734.5 435.1V444.3M735.5 433.0V442.4M736.5 431.8V444.8M737.5 433.1V441.9M738.5 431.4V440.5M739.5 431.6V442.1M740.5 433.2V441.1M741.5 431.8V444.2M742.5 433.7V440.4M743.5 434.1V439.9M744.5 433.3V444.3M745.5 435.1V442.2M746.5 431.4V443.2M747.5 432.1V443.1M748.5 435.0V443.6M749.5 430.5V440.6M750.5 435.3V441.8M751.5 431.7V440.0M752.5 431.3V440.7M753.5 433.4V443.3M754.5 433.5V441.8M755.5 432.8V440.8M756.5 432.2V441.5M757.5 435.1V441.9M758.5 434.4V444.6M759.5 432.8V441.2M760.5 432.7V442.3M761.5 433.0V440.4M762.5 434.2V440.4M763.5 430.5V440.1M764.5 434.6V442.1M765.5 430.7V440.5M766.5 432.2V440.5M767.5 433.0V442.6M768.5 433.8V442.2M769.5 430.4V440.9M770.5 435.1V443.7M771.5 434.1V441.2M772.5 433.5V443.4M773.5 433.0V441.5M774.5 435.0V441.1M775.5 432.7V444.8M776.5 431.5V443.0M777.5 430.3V440.8M778.5 433.6V442.8M779.5 431.0V440.2M780.5 432.8V442.7M781.5 432.6V442.5M782.5 433.4V444.7M783.5 432.7V443.3M784.5 431.7V440.7M785.5 432.3V444.1M786.5 435.0V441.9M787.5 432.0V440.4M788.5 432.8V444.0M789.5 430.7V443.7M790.5 433.5V441.8M791.5 430.7V442.3M792.5 432.5V441.4M793.5 434.2V442.6M794.5 431.9V441.8M795.5 430.5V441.0M796.5 434.6V443.8M797.5 430.5V443.8M798.5 431.3V442.8M799.5 430.4V443.9M800.5 433.1V441.4M801.5 432.9V442.2M802.5 430.9V441.6M803.5 432.3V443.5M804.5 432.3V443.4M805.5 430.8V442.5M806.5 433.3V441.3M807.5 433.4V443.9M808.5 430.9V442.3M809.5 433.3V440.4M810.5 430.5V442.9M811.5 431.9V441.7M812.5 433.0V441.0M813.5 434.4V441.0M814.5 434.7V442.7M815.5 432.4V442.4M816.5 432.2V440.3M817.5 431.9V444.0M818.5 431.1V444.2M819.5 434.0V440.8M820.5 430.4V441.6M821.5 432.0V442.0M822.5 432.4V441.5M823.5 434.6V440.5M824.5 432.3V444.0M825.5 430.4V440.5M826.5 432.6V441.0M827.5 432.1V443.6M828.5 434.5V444.1M829.5 430.6V442.2M830.5 434.4V443.5M831.5 433.9V441.0M832.5 430.1V443.4M833.5 430.7V444.7M834.5 431.3V441.2M835.5 432.2V443.7M836.5 433.6V442.2M837.5 434.0V442.5M838.5 430.6V441.5M839.5 430.8V443.7M840.5 430.8V442.3M841.5 433.2V442.3M842.5 433.1V441.3M843.5 432.7V444.1M844.5 430.4V444.8M845.5 430.5V442.3M846.5 431.5V444.2M847.5 430.9V442.6M848.5 430.4V442.9M849.5 431.7V441.3M850.5 433.8V444.5M851.5 432.2V441.5M852.5 432.3V441.4M853.5 433.6V442.7M854.5 430.6V441.2M855.5 432.0V444.7M856.5 429.9V443.5M857.5 430.2V444.7M858.5 433.8V443.6M859.5 430.2V441.5M860.5 433.3V441.5M861.5 433.9V443.3M862.5 432.6V443.2M863.5 432.1V444.9M864.5 433.0V444.5M865.5 432.2V445.2M866.5 433.9V441.3M867.5 433.6V441.4M868.5 432.2V442.7M869.5 430.2V443.1M870.5 432.9V444.3M871.5 431.1V441.4M872.5 433.2V445.0M873.5 432.4V445.1M874.5 432.5V442.9M875.5 433.6V443.0M876.5 431.9V441.3M877.5 432.9V443.7M878.5 430.0V441.7M879.5 432.0V442.3M880.5 432.0V441.6M881.5 433.5V443.9M882.5 432.8V445.2M883.5 432.1V445.2M884.5 432.9V445.0M885.5 430.1V442.3M886.5 432.4V442.8M887.5 431.8V442.4M888.5 433.4V443.4M889.5 433.5V444.9M890.5 432.9V443.0M891.5 431.1V443.0M892.5 430.0V445.1M893.5 432.3V443.0M894.5 432.1V443.6M895.5 429.7V445.2M896.5 432.4V444.0M897.5 430.7V444.6M898.5 431.5V442.4M899.5 430.4V444.3M900.5 431.2V444.7M901.5 432.6V443.1M902.5 432.9V442.9M903.5 432.6V442.8M904.5 430.3V444.5M905.5 432.1V442.5M906.5 432.6V444.6M907.5 431.7V444.1M908.5 430.3V442.4M909.5 431.3V444.2M910.5 432.2V443.7M911.5 431.0V443.0M912.5 431.3V444.5M913.5 431.5V442.4M914.5 430.8V443.3M915.5 430.5V444.9M916.5 432.6V444.5M917.5 430.1V442.2M918.5 431.2V443.0M919.5 432.4V443.9M920.5 430.7V444.5M921.5 433.1V442.3M922.5 432.9V443.7M923.5 432.5V444.6M924.5 431.4V444.3M925.5 432.2V442.8M926.5 431.6V443.9M927.5 430.7V442.8M928.5 431.0V442.7M929.5 432.1V442.3M930.5 433.3V443.6M931.5 432.7V441.8M932.5 431.5V442.1M933.5 431.6V441.9M934.5 432.1V442.2M935.5 431.9V443.2M936.5 433.0V441.2M937.5 433.2V442.9M938.5 434.1V441.8M939.5 434.3V440.7M940.5 434.0V440.2M941.5 435.8V439.7" stroke="#0000c0" stroke-width="1" fill="none"/><rect x="116.5" y="254.5" width="867" height="367" fill="none" stroke="#7a7a7a" stroke-width="1"/><path d="M116 254.5H983M116.5 254V621M116 621.5H983" fill="none" stroke="#505050" stroke-width="1" stroke-dasharray="2,2"/><path d="M112.5 254V622M110 254.5H112M110 277.5H112M110 300.5H112M110 323.5H112M110 346.5H112M110 368.5H112M110 391.5H112M110 414.5H112M110 437.5H112M110 460.5H112M110 483.5H112M110 506.5H112M110 529.5H112M110 552.5H112M110 575.5H112M110 598.5H112M110 621.5H112M116 625.5H984M116.5 626V628M166.5 626V628M217.5 626V628M267.5 626V628M317.5 626V628M368.5 626V628M418.5 626V628M469.5 626V628M519.5 626V628M569.5 626V628M620.5 626V628M670.5 626V628M721.5 626V628M771.5 626V628M821.5 626V628M872.5 626V628M922.5 626V628M973.5 626V628" stroke="#808080" stroke-width="1" fill="none"/><rect x="502.5" y="667.5" width="41" height="20" fill="#fff" stroke="#000" stroke-width="1"/><path d="M506 677.5H521" stroke="#0000c0" stroke-width="1"/></svg><div class="t" style="left:470px;top:233px;font-size:11px;color:#000;will-change:transform;">Integral Non-Linearity</div><div class="t g" style="right:923px;top:249px;font-size:11px;color:#444;letter-spacing:0.4px;">2.00</div><div class="t g" style="right:923px;top:272px;font-size:11px;color:#444;letter-spacing:0.4px;">1.75</div><div class="t g" style="right:923px;top:295px;font-size:11px;color:#444;letter-spacing:0.4px;">1.50</div><div class="t g" style="right:923px;top:318px;font-size:11px;color:#444;letter-spacing:0.4px;">1.25</div><div class="t g" style="right:923px;top:341px;font-size:11px;color:#444;letter-spacing:0.4px;">1.00</div><div class="t g" style="right:923px;top:363px;font-size:11px;color:#444;letter-spacing:0.4px;">0.75</div><div class="t g" style="right:923px;top:386px;font-size:11px;color:#444;letter-spacing:0.4px;">0.50</div><div class="t g" style="right:923px;top:409px;font-size:11px;color:#444;letter-spacing:0.4px;">0.25</div><div class="t g" style="right:923px;top:432px;font-size:11px;color:#444;letter-spacing:0.4px;">0.00</div><div class="t g" style="right:923px;top:455px;font-size:11px;color:#444;letter-spacing:0.4px;">-0.25</div><div class="t g" style="right:923px;top:478px;font-size:11px;color:#444;letter-spacing:0.4px;">-0.50</div><div class="t g" style="right:923px;top:501px;font-size:11px;color:#444;letter-spacing:0.4px;">-0.75</div><div class="t g" style="right:923px;top:524px;font-size:11px;color:#444;letter-spacing:0.4px;">-1.00</div><div class="t g" style="right:923px;top:547px;font-size:11px;color:#444;letter-spacing:0.4px;">-1.25</div><div class="t g" style="right:923px;top:570px;font-size:11px;color:#444;letter-spacing:0.4px;">-1.50</div><div class="t g" style="right:923px;top:593px;font-size:11px;color:#444;letter-spacing:0.4px;">-1.75</div><div class="t g" style="right:923px;top:616px;font-size:11px;color:#444;letter-spacing:0.4px;">-2.00</div><div class="t g" style="left:76px;width:80px;text-align:center;top:630px;font-size:11px;color:#444;letter-spacing:0.3px;">0</div><div class="t g" style="left:126px;width:80px;text-align:center;top:630px;font-size:11px;color:#444;letter-spacing:0.3px;">250</div><div class="t g" style="left:177px;width:80px;text-align:center;top:630px;font-size:11px;color:#444;letter-spacing:0.3px;">500</div><div class="t g" style="left:227px;width:80px;text-align:center;top:630px;font-size:11px;color:#444;letter-spacing:0.3px;">750</div><div class="t g" style="left:277px;width:80px;text-align:center;top:630px;font-size:11px;color:#444;letter-spacing:0.3px;">1,000</div><div class="t g" style="left:328px;width:80px;text-align:center;top:630px;font-size:11px;color:#444;letter-spacing:0.3px;">1,250</div><div class="t g" style="left:378px;width:80px;text-align:center;top:630px;font-size:11px;color:#444;letter-spacing:0.3px;">1,500</div><div class="t g" style="left:429px;width:80px;text-align:center;top:630px;font-size:11px;color:#444;letter-spacing:0.3px;">1,750</div><div class="t g" style="left:479px;width:80px;text-align:center;top:630px;font-size:11px;color:#444;letter-spacing:0.3px;">2,000</div><div class="t g" style="left:529px;width:80px;text-align:center;top:630px;font-size:11px;color:#444;letter-spacing:0.3px;">2,250</div><div class="t g" style="left:580px;width:80px;text-align:center;top:630px;font-size:11px;color:#444;letter-spacing:0.3px;">2,500</div><div class="t g" style="left:630px;width:80px;text-align:center;top:630px;font-size:11px;color:#444;letter-spacing:0.3px;">2,750</div><div class="t g" style="left:681px;width:80px;text-align:center;top:630px;font-size:11px;color:#444;letter-spacing:0.3px;">3,000</div><div class="t g" style="left:731px;width:80px;text-align:center;top:630px;font-size:11px;color:#444;letter-spacing:0.3px;">3,250</div><div class="t g" style="left:781px;width:80px;text-align:center;top:630px;font-size:11px;color:#444;letter-spacing:0.3px;">3,500</div><div class="t g" style="left:832px;width:80px;text-align:center;top:630px;font-size:11px;color:#444;letter-spacing:0.3px;">3,750</div><div class="t g" style="left:882px;width:80px;text-align:center;top:630px;font-size:11px;color:#444;letter-spacing:0.3px;">4,000</div><div class="t g" style="left:933px;width:80px;text-align:center;top:630px;font-size:11px;color:#444;letter-spacing:0.3px;">4,250</div><div class="t" style="left:536px;top:646px;font-size:11px;color:#444;will-change:transform;">Code</div><div class="t" style="left:55px;top:433px;width:30px;text-align:center;font-size:11px;color:#444;transform:rotate(-90deg);">INL</div><div class="t" style="left:523px;top:672px;font-size:11px;color:#000;will-change:transform;">INL</div>
</body></html>
